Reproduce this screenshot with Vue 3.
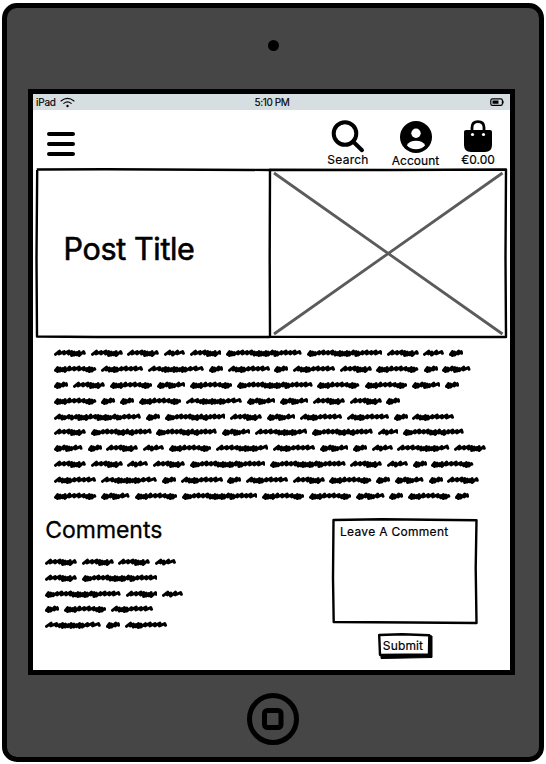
<script setup>
// Each word is a run of strokes between the low and high edge of the scribble.
// "u" is a tight up-down pair, "n" a loose slanted one.
const STEPS = { u: 2.5, n: 4.8 }

const WORDS = {
  a: { w: 14.1, s: 'uunu' },
  b: { w: 20.9, s: 'nunn' },
  c: { w: 28.5, s: 'uunuuunn' },
  d: { w: 31.8, s: 'nnnuuuun' },
  e: { w: 42.3, s: 'uuuunnnnuuuu' },
  f: { w: 42, s: 'nuuuunnnnn' },
  g: { w: 52.3, s: 'nnnnuuuuuuunn' },
  h: { w: 55.8, s: 'nnuuuuuuuuunnn' },
  i: { w: 60.7, s: 'uuunnnnuuunuunnnn' },
  j: { w: 75.6, s: 'uuunnnnuuuuuuunuunnnnn' },
  k: { w: 86.8, s: 'nuununuuuunnuuuuuunuunnnn' },
}

function scribble(key) {
  const { w, s } = WORDS[key]
  const total = [...s].reduce((sum, c) => sum + STEPS[c], 0)
  const k = (w - 3) / total
  let x = 1.5
  let d = 'M1.5 5.4'
  ;[...s].forEach((c, n) => {
    const step = STEPS[c] * k
    const top = c === 'u' ? 2.6 + (n % 3) * 0.5 : 2.1 + (n % 2) * 0.5
    const low = c === 'u' ? 6.5 - (n % 3) * 0.4 : 4.9
    d += `L${(x + step * 0.85).toFixed(2)} ${top}`
    x += step
    d += n === s.length - 1 ? `L${x.toFixed(2)} 4.3` : `L${(x - step * 0.25).toFixed(2)} ${low}`
  })
  return d
}

const post = [
  'dddbdjjdba', 'efhafafdeac', 'adecejeeca', 'eaaehccdda', 'kaidcffaf',
  'diicgibi', 'cadbegfcabgd', 'ddbdjjdbae', 'fhafafdeacad', 'ecejeecaea',
]
const comments = ['dddb', 'dj', 'jdb', 'aef', 'haf']
</script>

<template>
  <div class="tablet">
    <div class="camera-bar"><span class="camera"></span></div>
    <main class="screen">
      <div class="status">
        <span class="carrier">iPad
          <svg class="wifi" width="15" height="11" viewBox="0 0 15 11">
            <path d="M1 4Q7.5-1.2 14 4M3.8 6.4Q7.5 3.4 11.2 6.4" />
            <circle cx="7.5" cy="9" r="1.2" />
          </svg>
        </span>
        <span class="clock">5:10 PM</span>
        <svg class="battery" width="14" height="9" viewBox="0 0 14 9">
          <rect x=".8" y=".8" width="11.6" height="6.6" rx="1.6" />
          <path class="solid" d="M2.500 2.400h6v3.400h-6zM12.400 2.800h1.200v2.800h-1.200z" />
        </svg>
      </div>

      <header class="header">
        <svg class="menu" width="28" height="24" viewBox="0 0 28 24">
          <path d="M2 2h24M2 12h24M2 22h24" />
        </svg>
        <nav class="nav">
          <a class="search">
            <svg width="34" height="34" viewBox="0 0 34 34">
              <circle class="line" cx="14" cy="13.5" r="11.300" />
              <path class="line" d="M22 21.5l9 8.700" />
            </svg>
            <span>Search</span>
          </a>
          <a class="account">
            <svg width="34" height="34" viewBox="0 0 34 34">
              <circle cx="17" cy="17" r="16" />
              <circle class="white" cx="17" cy="13.3" r="4.7" />
              <path class="white" d="M7.8 25.2C9.5 22.1 13 20.8 17 20.8s7.5 1.3 9.2 4.4C24.2 27.9 20.8 29.3 17 29.3S9.8 27.9 7.8 25.2Z" />
            </svg>
            <span>Account</span>
          </a>
          <a class="cart">
            <svg width="30" height="34" viewBox="0 0 30 34">
              <path class="handle" d="M9 14V7.5Q9 1.6 15 1.6t6 5.9V14" />
              <path d="M3 10h24q2 0 2 2v13q0 7-7 7H8q-7 0-7-7V12q0-2 2-2z" />
              <circle class="white" cx="9.5" cy="14.5" r="1.6" />
              <circle class="white" cx="20.5" cy="14.5" r="1.6" />
            </svg>
            <span>€0.00</span>
          </a>
        </nav>
      </header>

      <section class="hero">
        <div class="title-box">
          <svg class="frame" viewBox="0 0 234 170">
            <path d="M.8 1.5L70 1.2L234 2M1.200 2L.5 90L1 168.500L60 169L234 169" />
          </svg>
          <h1>Post Title</h1>
        </div>
        <svg class="image-box" width="237" height="170" viewBox="0 0 237 170">
          <path class="cross" d="M4 5L232.500 166M232.500 5L4 166" />
          <path class="edge" d="M0 1.7L120 2L236 1.5L235.5 90L236 169L0 168.7L-.3 90Z" />
        </svg>
      </section>

      <article class="post">
        <p v-for="(line, r) in post" :key="r" class="line-row">
          <svg v-for="(c, n) in line" :key="n" :width="WORDS[c].w" height="8" :viewBox="`0 0 ${WORDS[c].w} 8`">
            <path :d="scribble(c)" />
          </svg>
        </p>
      </article>

      <section class="discussion">
        <div class="comments">
          <h2>Comments</h2>
          <p v-for="(line, r) in comments" :key="r" class="line-row">
            <svg v-for="(c, n) in line" :key="n" :width="WORDS[c].w" height="8" :viewBox="`0 0 ${WORDS[c].w} 8`">
              <path :d="scribble(c)" />
            </svg>
          </p>
        </div>
        <form class="form" @submit.prevent>
          <div class="field">
            <svg class="frame" viewBox="0 0 146 106">
              <path d="M1.5 2L50 1.2L144.5 2.3L143.7 50L144.5 105L80 104.5L1.7 104L1 60Z" />
            </svg>
            <label>Leave A Comment</label>
          </div>
          <button class="submit" type="submit">
            <svg class="frame" viewBox="0 0 54 26">
              <path class="shadow" d="M3 22L51 22V2.5L54 3V24.5L3 25.5Z" />
              <path class="face" d="M1.2 2L24 1.3L51.3 2.3L51 21.5L2 22Z" />
            </svg>
            <span>Submit</span>
          </button>
        </form>
      </section>
    </main>
    <div class="home-bar">
      <svg class="home" width="52" height="52" viewBox="0 0 52 52">
        <circle cx="26" cy="26" r="23.5" />
        <rect x="17.5" y="17.5" width="16.5" height="17" rx="3" />
      </svg>
    </div>
  </div>
</template>

<style>
body { background: #fff; }
</style>

<style scoped>
* { box-sizing: border-box; }
h1, h2, p { margin: 0; font-weight: 400; }
svg { display: block; flex: none; }
.tablet {
  width: 542px; height: 759px; margin: 3px 0 0 2px;
  display: flex; flex-direction: column; align-items: center;
  border: 5px solid #000; border-radius: 15px; background: #464646;
  font-family: Inter, "Liberation Sans", sans-serif; color: #000;
}
.camera-bar { height: 81px; padding-top: 32px; }
.camera { display: block; width: 11px; height: 11px; border-radius: 50%; background: #000; }
.screen {
  width: 487px; height: 586px; flex: none; margin-right: 3px;
  border: 5px solid #000; background: #fff; display: flex; flex-direction: column;
}
.status {
  height: 16px; flex: none; padding: 0 6px 0 3px; background: #d7dee1;
  display: grid; grid-template-columns: 1fr auto 1fr; align-items: center;
  font-size: 10px; line-height: 14px; -webkit-text-stroke: .15px #000;
}
.carrier { display: flex; align-items: center; gap: 4px; height: 14px; letter-spacing: -.2px; }
.wifi { margin-top: 1px; }
.wifi path { fill: none; stroke: #000; stroke-width: 1.1; stroke-linecap: round; }
.clock { height: 15px; padding-left: 4px; letter-spacing: -.35px; }
.battery { justify-self: end; }
.battery rect { fill: none; stroke: #000; stroke-width: 1.2; }
.header { height: 58px; flex: none; display: flex; justify-content: space-between; padding: 10px 12px 0 14px; }
.menu { margin-top: 12px; }
.menu path { stroke: #000; stroke-width: 4; stroke-linecap: round; }
.nav { display: flex; }
.nav a { display: flex; flex-direction: column; align-items: center; font-size: 12px; line-height: 11px; -webkit-text-stroke: .2px #000; }
.search { width: 50px; }
.search span { letter-spacing: .25px; }
.account { width: 85px; }
.account span { margin-top: 1px; }
.cart { width: 40px; }
.line { fill: none; stroke: #000; stroke-width: 4; stroke-linecap: round; }
.handle { fill: none; stroke: #000; stroke-width: 2.8; }
.white { fill: #fff; }
.hero { display: flex; flex: none; height: 170px; margin-left: 2.5px; }
.title-box { position: relative; width: 234px; padding: 60px 0 0 28px; }
.frame { position: absolute; inset: 0; width: 100%; height: 100%; overflow: visible; }
.frame path, .edge { fill: none; stroke: #000; stroke-width: 2.4; stroke-linejoin: round; }
.frame .shadow { fill: #000; stroke-width: 1; }
.frame .face { fill: #fff; }
h1 { position: relative; font-size: 30.5px; line-height: 42px; letter-spacing: -.35px; -webkit-text-stroke: .6px #000; }
.image-box { overflow: visible; }
.cross { fill: none; stroke: #5b5b5b; stroke-width: 2.8; }
.post { margin: 7.5px 0 0 21.4px; }
.line-row { display: flex; align-items: center; gap: 4.75px; height: 15.82px; }
.line-row path { fill: none; stroke: #000; stroke-width: 3; stroke-linecap: round; stroke-linejoin: round; }
.discussion { display: flex; justify-content: space-between; padding: 14.5px 32px 0 12.3px; }
h2 { margin: -2px 0 10px; font-size: 23px; line-height: 28px; letter-spacing: -.05px; -webkit-text-stroke: .3px #000; }
.form { display: flex; flex-direction: column; align-items: center; gap: 9px; }
.field { position: relative; width: 146px; height: 106px; padding: 7px 8px; font-size: 12px; line-height: 14px; letter-spacing: .3px; -webkit-text-stroke: .2px #000; }
.field label { position: relative; }
.submit { position: relative; width: 54px; height: 26px; padding: 0 4px 1px 0; border: 0; background: none; font: 12px/14px Inter, "Liberation Sans", sans-serif; color: #000; letter-spacing: .15px; -webkit-text-stroke: .2px #000; }
.submit span { position: relative; }
.home-bar { padding-top: 18px; }
.home circle, .home rect { fill: none; stroke: #000; stroke-width: 5; }
</style>
